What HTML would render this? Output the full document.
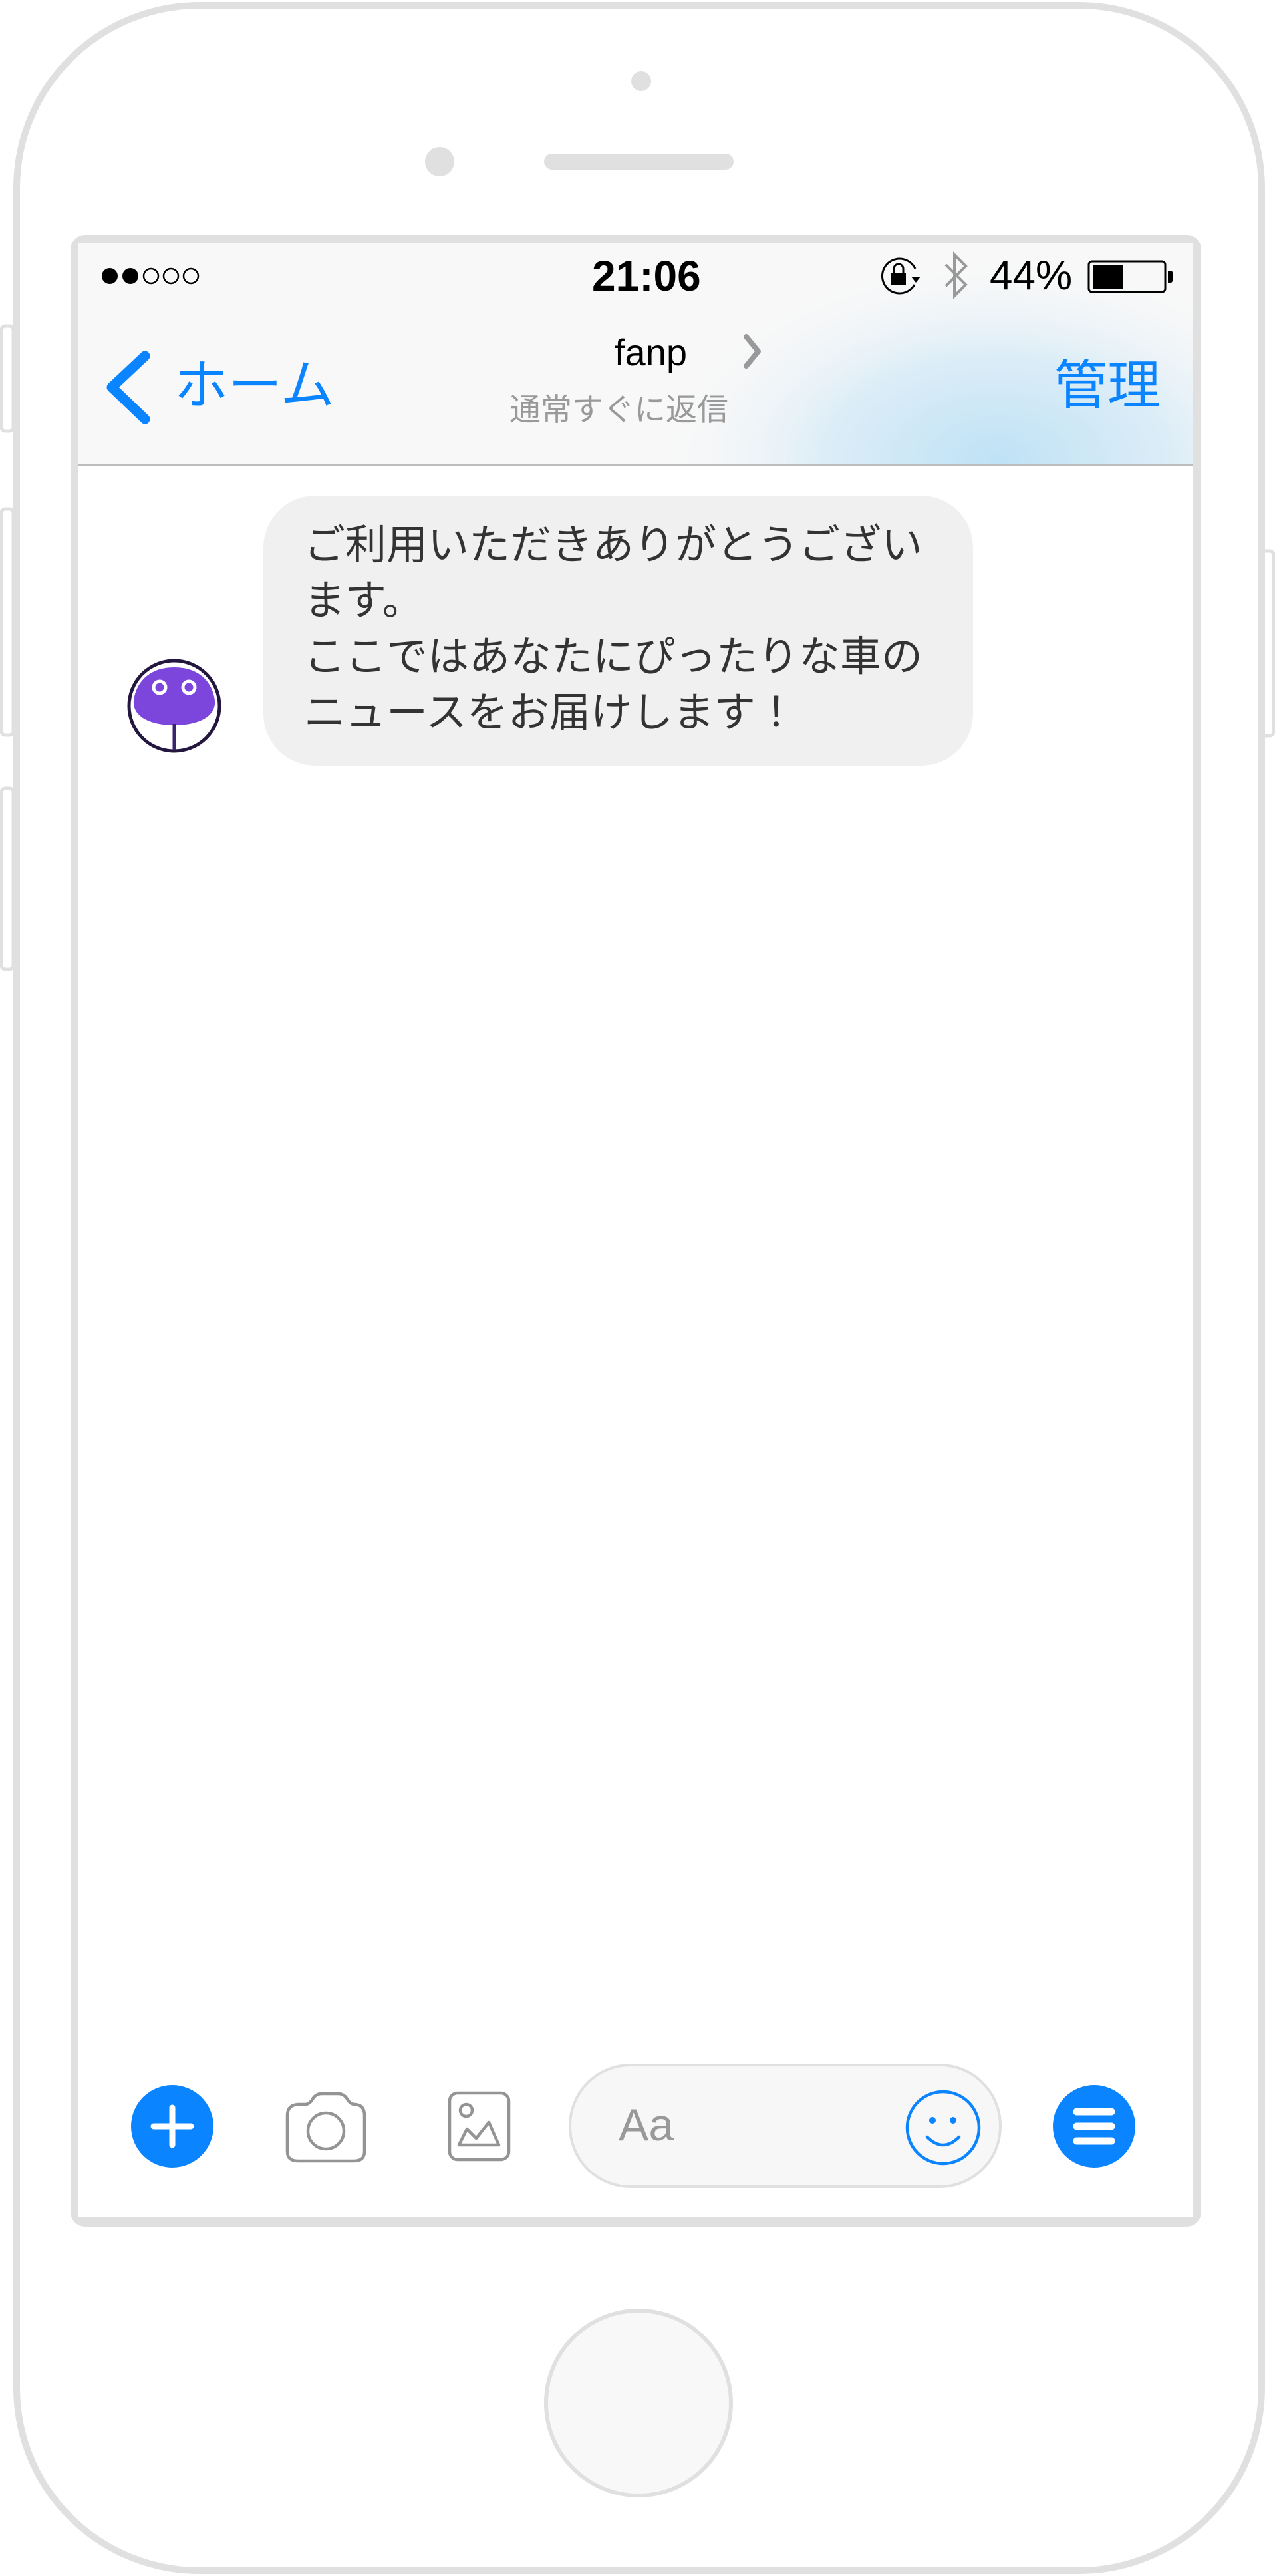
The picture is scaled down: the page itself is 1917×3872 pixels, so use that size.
<!DOCTYPE html>
<html><head><meta charset="utf-8"><style>
html,body{margin:0;padding:0;background:#fff;}
body{width:1917px;height:3872px;position:relative;overflow:hidden;font-family:"Liberation Sans","Noto Sans CJK JP",sans-serif;}
.t{position:absolute;white-space:nowrap;line-height:1;}
</style></head><body>
<svg width="1917" height="3872" style="position:absolute;left:0;top:0">
<defs>
<radialGradient id="glow" cx="1500" cy="690" r="520" gradientUnits="userSpaceOnUse" gradientTransform="translate(1500 690) scale(1 0.6) translate(-1500 -690)">
<stop offset="0" stop-color="#bfe2f6"/><stop offset="0.5" stop-color="#dcedf7"/><stop offset="1" stop-color="#f8f8f8" stop-opacity="0"/></radialGradient>
</defs>
<rect x="2" y="490" width="18" height="158" rx="6" fill="#fff" stroke="#e0e0e0" stroke-width="5"/>
<rect x="2" y="765" width="18" height="340" rx="6" fill="#fff" stroke="#e0e0e0" stroke-width="5"/>
<rect x="2" y="1185" width="18" height="272" rx="6" fill="#fff" stroke="#e0e0e0" stroke-width="5"/>
<rect x="1897" y="828" width="18" height="278" rx="6" fill="#fff" stroke="#e0e0e0" stroke-width="5"/>
<rect x="25" y="8" width="1872" height="3856" rx="275" fill="#fff" stroke="#e0e0e0" stroke-width="10"/>
<circle cx="964" cy="122" r="15" fill="#e0e0e0"/>
<circle cx="661" cy="243" r="22" fill="#e0e0e0"/>
<rect x="818" y="231" width="285" height="24" rx="12" fill="#e0e0e0"/>
<rect x="106" y="353" width="1700" height="2994" rx="22" fill="#e0e0e0"/>
<rect x="118" y="365" width="1676" height="2968" fill="#fff"/>
<rect x="118" y="365" width="1676" height="333" fill="#f8f8f8"/>
<rect x="900" y="365" width="894" height="333" fill="url(#glow)"/>
<rect x="118" y="697" width="1676" height="3" fill="#bdbdbd"/>
<circle cx="165" cy="415" r="12" fill="#000"/>
<circle cx="196" cy="415" r="12" fill="#000"/>
<circle cx="227" cy="415" r="11" fill="none" stroke="#000" stroke-width="2.5"/>
<circle cx="257" cy="415" r="11" fill="none" stroke="#000" stroke-width="2.5"/>
<circle cx="287" cy="415" r="11" fill="none" stroke="#000" stroke-width="2.5"/>
<path d="M1375 428 A26 26 0 1 1 1376 404" fill="none" stroke="#000" stroke-width="3"/>
<path d="M1370 416 l14 0 l-7 9z" fill="#000"/>
<rect x="1340" y="410" width="22" height="18" fill="#000"/>
<path d="M1344 410 v-6 a7 7 0 0 1 14 0 v6" fill="none" stroke="#000" stroke-width="3"/>
<path d="M1422 398 L1452 428 L1435 445 L1435 383 L1452 400 L1422 430" fill="none" stroke="#999" stroke-width="4"/>
<rect x="1637" y="393" width="115" height="46" rx="5" fill="none" stroke="#000" stroke-width="3"/>
<rect x="1644" y="399" width="44" height="35" fill="#000"/>
<path d="M1756 407 h4 a3 3 0 0 1 3 3 v12 a3 3 0 0 1 -3 3 h-4z" fill="#000"/>
<path d="M218 535 L168 582 L218 630" fill="none" stroke="#0a84ff" stroke-width="15" stroke-linecap="round" stroke-linejoin="round"/>
<path d="M1122 506 L1140 528 L1122 550" fill="none" stroke="#999" stroke-width="8" stroke-linecap="round" stroke-linejoin="round"/>
<rect x="396" y="745" width="1067" height="406" rx="78" fill="#f0f0f0"/>
<circle cx="262" cy="1061" r="68" fill="#fff" stroke="#24173f" stroke-width="5"/>
<path d="M262 1003 C302 1003 320 1028 323 1053 C325 1076 300 1090 262 1090 C224 1090 199 1076 201 1053 C204 1028 222 1003 262 1003Z" fill="#7c46dd"/>
<line x1="262" y1="1088" x2="262" y2="1128" stroke="#3a2470" stroke-width="5"/>
<circle cx="240" cy="1033" r="9" fill="#7c46dd" stroke="#fff" stroke-width="5"/>
<circle cx="284" cy="1033" r="9" fill="#7c46dd" stroke="#fff" stroke-width="5"/>
<circle cx="259" cy="3196" r="62" fill="#0a84ff"/>
<path d="M259 3168 V3224 M231 3196 H287" stroke="#fff" stroke-width="9" stroke-linecap="round"/>
<path d="M448 3163 H460 Q466 3162 470 3155 Q474 3148 482 3147 H510 Q518 3148 522 3155 Q526 3162 532 3163 H534 Q548 3164 548 3180 V3234 Q548 3248 532 3248 H448 Q432 3248 432 3234 V3180 Q432 3164 448 3163Z" fill="none" stroke="#949494" stroke-width="4.5"/>
<circle cx="490" cy="3203" r="27" fill="none" stroke="#949494" stroke-width="4.5"/>
<rect x="676" y="3146" width="89" height="100" rx="12" fill="none" stroke="#949494" stroke-width="4.5"/>
<circle cx="701" cy="3172" r="9" fill="none" stroke="#949494" stroke-width="4.5"/>
<path d="M690 3224 L702 3200 L716 3214 L735 3190 L750 3224Z" fill="none" stroke="#949494" stroke-width="4.5" stroke-linejoin="round"/>
<rect x="857" y="3104" width="647" height="183" rx="91" fill="#f7f7f7" stroke="#e0e0e0" stroke-width="4"/>
<circle cx="1418" cy="3198" r="54" fill="none" stroke="#0a84ff" stroke-width="4.5"/>
<circle cx="1402" cy="3187" r="5" fill="#0a84ff"/>
<circle cx="1433" cy="3187" r="5" fill="#0a84ff"/>
<path d="M1394 3212 Q1418 3236 1442 3212" fill="none" stroke="#0a84ff" stroke-width="4.5" stroke-linecap="round"/>
<circle cx="1645" cy="3196" r="62" fill="#0a84ff"/>
<path d="M1619 3174 H1671 M1619 3196 H1671 M1619 3218 H1671" stroke="#fff" stroke-width="11" stroke-linecap="round"/>
<circle cx="960" cy="3612" r="139" fill="#f8f8f8" stroke="#e0e0e0" stroke-width="6"/>
</svg>
<div class="t" style="left:890px;top:383px;font-size:64px;font-weight:bold;color:#000;">21:06</div>
<div class="t" style="left:1488px;top:384px;font-size:62px;color:#000;">44%</div>
<div class="t" style="left:262px;top:540px;font-size:81px;color:#0a84ff;">ホーム</div>
<div class="t" style="left:924px;top:502px;font-size:56px;color:#000;">fanp</div>
<div class="t" style="left:766px;top:592px;font-size:47px;color:#999;">通常すぐに返信</div>
<div class="t" style="left:1585px;top:540px;font-size:80px;color:#0a84ff;">管理</div>
<div class="t" style="left:457px;top:789px;font-size:62px;color:#333;">ご利用いただきありがとうござい</div>
<div class="t" style="left:457px;top:873px;font-size:62px;color:#333;">ます。</div>
<div class="t" style="left:457px;top:957px;font-size:62px;color:#333;">ここではあなたにぴったりな車の</div>
<div class="t" style="left:457px;top:1041px;font-size:62px;color:#333;">ニュースをお届けします！</div>
<div class="t" style="left:930px;top:3160px;font-size:68px;color:#999;">Aa</div>
</body></html>
